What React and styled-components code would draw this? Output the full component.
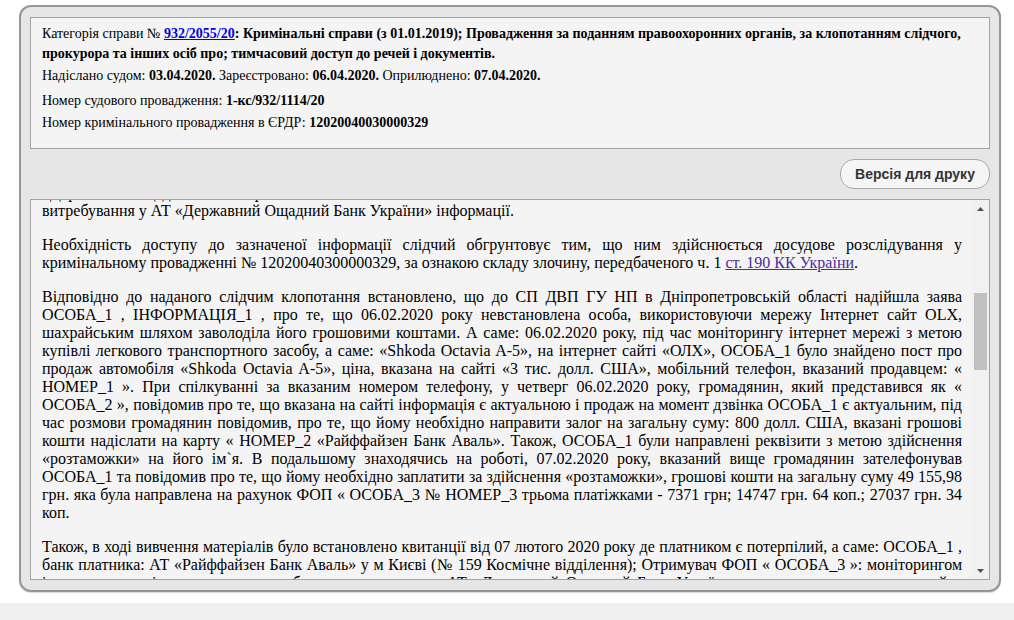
import React, { useLayoutEffect, useRef, useState } from "react";
import styled, { createGlobalStyle } from "styled-components";

const GlobalStyle = createGlobalStyle`
  html, body { margin: 0; padding: 0; background: #ffffff; }
  body { font-family: "Liberation Serif", "Times New Roman", serif; color: #000; }
`;

const Page = styled.div`
  width: 1014px;
  min-height: 620px;
  display: flex;
  flex-direction: column;
`;

const Frame = styled.section`
  margin: 5px 13px 0 19px;
  height: 587px;
  box-sizing: border-box;
  border: 2px solid #969696;
  border-radius: 12px;
  background: #e6e6e6;
  box-shadow: 0 1px 1px rgba(0, 0, 0, 0.15);
  padding: 10px 9px;
  display: flex;
  flex-direction: column;
`;

const InfoBox = styled.div`
  height: 132px;
  box-sizing: border-box;
  border: 1px solid #a3a3a3;
  background: #f4f4f4;
  padding: 6px 11px 0 11px;
  font-family: "Liberation Serif", "Times New Roman", serif;
  font-size: 14px;
  color: #000;
`;

const InfoRow = styled.div`
  line-height: 20px;
  margin-top: ${(p) => p.$gap || 0}px;
`;

const CaseLink = styled.a`
  color: #0000ee;
  font-weight: bold;
  text-decoration: underline;
`;

const Strong = styled.b`
  font-weight: bold;
`;

const ToolBar = styled.div`
  display: flex;
  justify-content: flex-end;
  margin: 10px 0;
`;

const PrintButton = styled.button`
  width: 150px;
  height: 30px;
  box-sizing: border-box;
  border: 1px solid #a8a8a8;
  border-radius: 14px;
  background: #f5f5f5;
  font-family: "Liberation Sans", Arial, sans-serif;
  font-weight: bold;
  font-size: 14px;
  color: #333;
  padding: 0;
  cursor: pointer;
`;

const DocBox = styled.div`
  height: 381px;
  box-sizing: border-box;
  border: 1px solid #a3a3a3;
  background: #f4f4f4;
  display: flex;
`;

const Scroller = styled.div`
  flex: 1;
  min-width: 0;
  overflow-y: scroll;
  scrollbar-width: none;
  padding: 0 10px 0 11px;
  font-family: "Liberation Serif", "Times New Roman", serif;
  font-size: 16px;
  color: #000;
  &::-webkit-scrollbar {
    display: none;
  }
`;

const Rail = styled.div`
  flex: none;
  width: 17px;
  background: #f1f1f1;
  display: flex;
  flex-direction: column;
`;

const ArrowButton = styled.div`
  flex: none;
  height: 17px;
  display: flex;
  align-items: center;
  justify-content: center;
`;

const Track = styled.div`
  flex: 1;
  display: flex;
  flex-direction: column;
  padding: 0 2px;
`;

const Thumb = styled.div`
  flex: none;
  background: #c1c1c1;
`;

const Para = styled.p`
  margin: 16px 0;
  text-align: ${(p) => (p.$center ? "center" : "justify")};
  font-weight: ${(p) => (p.$bold ? "bold" : "normal")};
`;

const LawLink = styled.a`
  color: #4b2c9b;
  text-decoration: underline;
`;

const Footer = styled.div`
  margin-top: 11px;
  height: 17px;
  background: #f0f0f0;
`;

function Arrow({ down }) {
  return (
    <svg width="7" height="4" viewBox="0 0 7 4" aria-hidden="true">
      <polygon points={down ? "0,0 7,0 3.5,4" : "0,4 7,4 3.5,0"} fill="#505050" />
    </svg>
  );
}

export default function App() {
  const boxRef = useRef(null);
  const anchorRef = useRef(null);
  const trackRef = useRef(null);
  const [thumb, setThumb] = useState({ top: 0, height: 0 });

  useLayoutEffect(() => {
    const box = boxRef.current;
    const p = anchorRef.current;
    const track = trackRef.current;
    if (!box || !p || !track) return;
    const boxTop = box.getBoundingClientRect().top;
    const pBottom = p.getBoundingClientRect().bottom - boxTop + box.scrollTop;
    box.scrollTop = Math.round(pBottom - 18 - 2);
    const trackLen = track.clientHeight;
    const h = Math.max(20, Math.round((trackLen * box.clientHeight) / box.scrollHeight));
    const maxScroll = box.scrollHeight - box.clientHeight;
    const top = maxScroll > 0 ? Math.round(((trackLen - h) * box.scrollTop) / maxScroll) : 0;
    setThumb({ top, height: h });
  }, []);

  return (
    <Page>
      <GlobalStyle />
      <Frame>
        <InfoBox>
          <InfoRow>
            Категорія справи № <CaseLink href="#">932/2055/20</CaseLink>
            <Strong>
              : Кримінальні справи (з 01.01.2019); Провадження за поданням правоохоронних органів, за
              клопотанням слідчого, прокурора та інших осіб про; тимчасовий доступ до речей і документів.
            </Strong>
          </InfoRow>
          <InfoRow $gap={2}>
            Надіслано судом: <Strong>03.04.2020.</Strong> Зареєстровано: <Strong>06.04.2020.</Strong>{" "}
            Оприлюднено: <Strong>07.04.2020.</Strong>
          </InfoRow>
          <InfoRow $gap={5}>
            Номер судового провадження: <Strong>1-кс/932/1114/20</Strong>
          </InfoRow>
          <InfoRow $gap={2}>
            Номер кримінального провадження в ЄРДР: <Strong>12020040030000329</Strong>
          </InfoRow>
        </InfoBox>

        <ToolBar>
          <PrintButton type="button">Версія для друку</PrintButton>
        </ToolBar>

        <DocBox>
          <Scroller ref={boxRef}>
            <Para>Справа № 932/2055/20</Para>
            <Para>Провадження № 1-кс/932/1114/20</Para>
            <Para $center $bold>
              У Х В А Л А
              <br />
              І М Е Н Е М У К Р А Ї Н И
            </Para>
            <Para>03 квітня 2020 року м. Дніпро</Para>
            <Para>
              Слідчий суддя Бабушкінського районного суду м. Дніпропетровська ОСОБА_4 , за участю секретаря
              судового засідання ОСОБА_7 , розглянувши у відкритому судовому засіданні клопотання слідчого СВ
              Дніпровського відділу поліції ГУ НП в Дніпропетровській області ОСОБА_5 , погоджене з прокурором
              Дніпропетровської місцевої прокуратури № 1 ОСОБА_6 , про тимчасовий доступ до речей і документів у
              кримінальному провадженні № 12020040030000329 від 07.02.2020 року, -
            </Para>
            <Para $center $bold>
              В С Т А Н О В И В :
            </Para>
            <Para>
              Слідчий звернувся до слідчого судді з клопотанням, в якому просить надати тимчасовий доступ до
              речей і документів з можливістю їх вилучення.
            </Para>
            <Para ref={anchorRef}>
              До слідчого судді надійшло клопотання слідчого про тимчасовий доступ до речей і документів, які
              перебувають у володінні АТ «Державний Ощадний Банк України», з можливістю ознайомлення з ними,
              виготовлення їх копій та
              <br />
              витребування у АТ «Державний Ощадний Банк України» інформації.
            </Para>
            <Para>
              Необхідність доступу до зазначеної інформації слідчий обгрунтовує тим, що ним здійснюється
              досудове розслідування у кримінальному провадженні № 12020040300000329, за ознакою складу
              злочину, передбаченого ч. 1 <LawLink href="#">ст. 190 КК України</LawLink>.
            </Para>
            <Para>
              Відповідно до наданого слідчим клопотання встановлено, що до СП ДВП ГУ НП в Дніпропетровській
              області надійшла заява ОСОБА_1 , ІНФОРМАЦІЯ_1 , про те, що 06.02.2020 року невстановлена особа,
              використовуючи мережу Інтернет сайт OLX, шахрайським шляхом заволоділа його грошовими коштами. А
              саме: 06.02.2020 року, під час моніторингу інтернет мережі з метою купівлі легкового транспортного
              засобу, а саме: «Shkoda Octavia A-5», на інтернет сайті «ОЛХ», ОСОБА_1 було знайдено пост про
              продаж автомобіля «Shkoda Octavia A-5», ціна, вказана на сайті «3 тис. долл. США», мобільний
              телефон, вказаний продавцем: « НОМЕР_1 ». При спілкуванні за вказаним номером телефону, у четверг
              06.02.2020 року, громадянин, який представився як « ОСОБА_2 », повідомив про те, що вказана на
              сайті інформація є актуальною і продаж на момент дзвінка ОСОБА_1 є актуальним, під час розмови
              громадянин повідомив, про те, що йому необхідно направити залог на загальну суму: 800 долл. США,
              вказані грошові кошти надіслати на карту « НОМЕР_2 «Райффайзен Банк Аваль». Також, ОСОБА_1 були
              направлені реквізити з метою здійснення «розтаможки» на його ім`я. В подальшому знаходячись на
              роботі, 07.02.2020 року, вказаний вище громадянин зателефонував ОСОБА_1 та повідомив про те, що
              йому необхідно заплатити за здійснення «розтаможки», грошові кошти на загальну суму 49 155,98 грн.
              яка була направлена на рахунок ФОП « ОСОБА_3 № НОМЕР_3 трьома платіжками - 7371 грн; 14747 грн.
              64 коп.; 27037 грн. 34 коп.
            </Para>
            <Para>
              Також, в ході вивчення матеріалів було встановлено квитанції від 07 лютого 2020 року де платником
              є потерпілий, а саме: ОСОБА_1 , банк платника: АТ «Райффайзен Банк Аваль» у м Києві (№ 159
              Космічне відділення); Отримувач ФОП « ОСОБА_3 »: моніторингом інтернет ресурсів встановлено, що
              банком отримувача є АТ «Державний Ощадний Банк України», а отримувач зареєстрований у Міністерстві
              юстиції України як фізична особа-підприємець.
            </Para>
            <Para>
              Слідчий у судове засідання не з'явився, надав заяву про розгляд клопотання без його участі,
              клопотання підтримав у повному обсязі.
            </Para>
            <Para>
              Відповідно до ч. 2 ст. 163 КПК України слідчий суддя вважає за можливе розглянути клопотання без
              повідомлення особи, у володінні якої знаходяться речі і документи, оскільки існує реальна загроза
              зміни або знищення речей чи документів.
            </Para>
            <Para>
              Згідно зі ст. 159 КПК України тимчасовий доступ до речей і документів полягає у наданні стороні
              кримінального провадження особою, у володінні якої знаходяться такі речі і документи, можливості
              ознайомитися з ними, зробити їх копії та, у разі прийняття відповідного рішення слідчим суддею,
              судом, вилучити їх (здійснити їх виїмку).
            </Para>
            <Para>
              Відповідно до ч. 5 ст. 163 КПК України слідчий суддя, суд постановляє ухвалу про надання
              тимчасового доступу до речей і документів, якщо сторона кримінального провадження у своєму
              клопотанні доведе наявність достатніх підстав вважати, що ці речі або документи: перебувають або
              можуть перебувати у володінні відповідної фізичної або юридичної особи; самі по собі або в
              сукупності з іншими речами і документами кримінального провадження мають суттєве значення для
              встановлення важливих обставин у кримінальному провадженні; не становлять собою або не включають
              речей і документів, які містять охоронювану законом таємницю.
            </Para>
            <Para>
              Згідно з ч. 7 ст. 163 КПК України слідчий суддя, суд може зазначити в ухвалі про надання
              тимчасового доступу до речей і документів про необхідність вилучення речей і документів, якщо
              особа не доведе необхідність залишення оригіналів документів.
            </Para>
            <Para>
              Враховуючи викладене, слідчий суддя вважає, що слідчим доведено наявність достатніх підстав
              вважати, що зазначені в клопотанні документи перебувають у володінні АТ «Державний Ощадний Банк
              України», мають суттєве значення для встановлення важливих обставин у кримінальному провадженні, а
              тому клопотання підлягає задоволенню.
            </Para>
            <Para>
              Разом з тим, слідчий суддя вважає, що отримання інформації, яка міститься у зазначених документах,
              іншими способами є неможливим, оскільки вона становить банківську таємницю та може бути розкрита
              банком лише на підставі рішення суду відповідно до ст. 62 Закону України «Про банки і банківську
              діяльність».
            </Para>
            <Para>Керуючись ст.ст. 159-166, 309, 369-372 КПК України, слідчий суддя, -</Para>
            <Para $center $bold>
              П О С Т А Н О В И В :
            </Para>
            <Para>Клопотання слідчого про тимчасовий доступ до речей і документів - задовольнити.</Para>
            <Para>
              Надати слідчому СВ Дніпровського відділу поліції ГУ НП в Дніпропетровській області ОСОБА_5
              тимчасовий доступ до документів, які перебувають у володінні АТ «Державний Ощадний Банк України»,
              а саме: інформації щодо руху коштів по рахунку ФОП « ОСОБА_3 » № НОМЕР_3 за період з 01.02.2020
              року по теперішній час, з можливістю ознайомлення з ними та виготовлення їх копій.
            </Para>
            <Para>
              Зобов'язати АТ «Державний Ощадний Банк України» надати слідчому тимчасовий доступ до зазначених
              документів та забезпечити можливість виготовлення їх копій.
            </Para>
            <Para>
              Роз'яснити особі, у володінні якої знаходяться речі і документи, що у разі невиконання ухвали про
              надання тимчасового доступу до речей і документів слідчий суддя за клопотанням сторони
              кримінального провадження має право постановити ухвалу про дозвіл на проведення обшуку згідно з
              положеннями КПК України з метою відшукання та вилучення зазначених речей і документів.
            </Para>
            <Para>
              Ухвала про тимчасовий доступ до речей і документів підлягає негайному виконанню після її
              постановлення.
            </Para>
            <Para>Строк дії ухвали – один місяць з дня її постановлення.</Para>
            <Para>Ухвала оскарженню не підлягає.</Para>
            <Para>Слідчий суддя ОСОБА_4</Para>
          </Scroller>
          <Rail>
            <ArrowButton>
              <Arrow />
            </ArrowButton>
            <Track ref={trackRef}>
              <Thumb style={{ marginTop: thumb.top, height: thumb.height }} />
            </Track>
            <ArrowButton>
              <Arrow down />
            </ArrowButton>
          </Rail>
        </DocBox>
      </Frame>
      <Footer />
    </Page>
  );
}
